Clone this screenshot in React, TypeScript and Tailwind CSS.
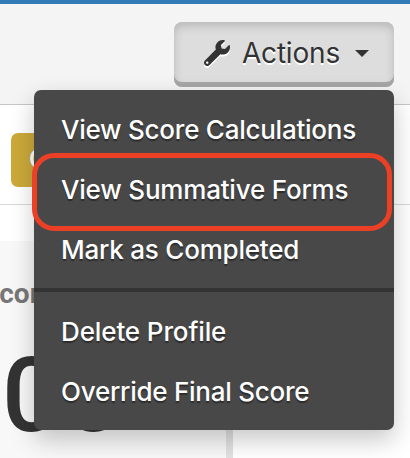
import React from 'react'
import { FaWrench } from 'react-icons/fa'

const viewOptions = [
  { title: 'View Score Calculations', className: 'tracking-[-0.25px]' },
  { title: 'View Summative Forms', className: 'tracking-[-0.2px]' },
  { title: 'Mark as Completed', className: 'tracking-[-0.22px]' }
]

const profileOptions = [
  { title: 'Delete Profile', className: 'tracking-[-0.12px]' },
  { title: 'Override Final Score', className: 'tracking-[-0.25px]' }
]

function MenuItem({ title, className }: { title: string; className: string }) {
  return (
    <li>
      <button
        className={`block h-[60px] w-full whitespace-nowrap px-[27px] text-left text-[26px] font-medium leading-[60px] text-white [text-shadow:0_2px_1px_rgba(0,0,0,0.4)] ${className}`}
      >
        {title}
      </button>
    </li>
  )
}

function ActionsMenu() {
  return (
    <div className="absolute left-[34px] top-[90px] z-10 h-[340px] w-[360px] rounded-[7px] bg-[#484848] pt-[10px] shadow-[0_10px_24px_rgba(0,0,0,0.22)]">
      <ul>
        {viewOptions.map((option) => (
          <MenuItem key={option.title} {...option} />
        ))}
      </ul>
      <div className="mt-2 mb-[10px] h-1 bg-[#333333]" />
      <ul>
        {profileOptions.map((option) => (
          <MenuItem key={option.title} {...option} />
        ))}
      </ul>
      {/* highlight around the summative forms item */}
      <div className="pointer-events-none absolute -left-[2px] top-[63px] h-[78px] w-[360px] rounded-[22px] border-[5px] border-[#eb4026]" />
    </div>
  )
}

export default function App() {
  return (
    <div className="relative h-[458px] w-[410px] overflow-hidden bg-white font-['Inter','Liberation_Sans',sans-serif]">
      <header className="flex h-[105px] items-start justify-end border-b border-t-4 border-b-[#c6c6c6] border-t-[#337ab7] bg-[#f4f4f4] pr-4 pt-[18px]">
        <button className="flex h-[65px] w-[220px] items-center rounded-[8px] bg-[#dddddd] pb-[3px] pl-[30px] text-[#333333] shadow-[inset_0_-5px_0_#a6a6a6,inset_0_4px_10px_rgba(0,0,0,0.17)]">
          <FaWrench className="h-[26px] w-[26px] [filter:drop-shadow(0_2px_0_#ffffff)]" />
          <span className="ml-[12px] text-[28px] tracking-[-0.2px] [text-shadow:0_2px_0_#ffffff]">Actions</span>
          <span className="ml-[15px] border-x-[7px] border-t-[7px] border-x-transparent border-t-[#333333]" />
        </button>
      </header>

      <div className="flex h-[100px] items-center border-b border-[#d9d9d9] pl-[11px] pt-[11px]">
        <span className="h-[54px] w-[120px] rounded-[7px] bg-[#cba93a] pl-[18px] text-[25px] font-semibold leading-[53px] text-white">
          Completed
        </span>
      </div>

      <div className="pt-9">
        <section className="h-[217px] w-[233px] overflow-hidden border-r-[7px] border-[#e1e1e1] bg-[#f8f8f8] font-['Roboto',sans-serif]">
          <h3 className="-ml-[18px] pt-[35px] text-[28px] font-bold leading-9 text-[#777777]">Score</h3>
          <p className="pl-[2px] pt-[24px] text-[104px] font-medium leading-[120px] tracking-[3px] text-[#333333]">00</p>
        </section>
      </div>

      <ActionsMenu />
    </div>
  )
}
